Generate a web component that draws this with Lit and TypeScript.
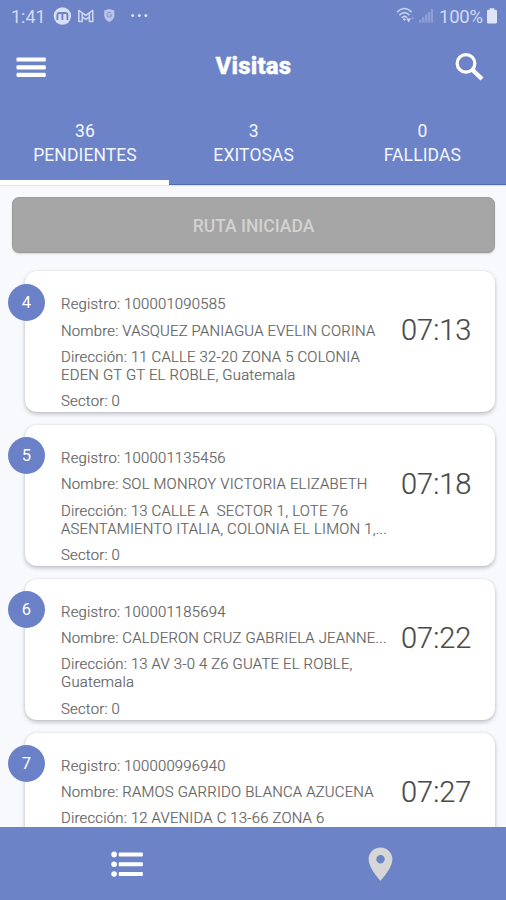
import { LitElement, html, css, nothing } from "lit";
import { customElement, property } from "lit/decorators.js";

interface Visit {
  order: number;
  registro: string;
  nombre: string;
  direccion: string[];
  sector?: string;
  hora: string;
}

const VISITS: Visit[] = [
  { order: 4, registro: "100001090585", nombre: "VASQUEZ PANIAGUA EVELIN CORINA", direccion: ["11 CALLE 32-20 ZONA 5 COLONIA", "EDEN GT GT EL ROBLE, Guatemala"], sector: "0", hora: "07:13" },
  { order: 5, registro: "100001135456", nombre: "SOL MONROY VICTORIA ELIZABETH", direccion: ["13 CALLE A  SECTOR 1, LOTE 76", "ASENTAMIENTO ITALIA, COLONIA EL LIMON 1,..."], sector: "0", hora: "07:18" },
  { order: 6, registro: "100001185694", nombre: "CALDERON CRUZ GABRIELA JEANNE...", direccion: ["13 AV 3-0 4 Z6 GUATE EL ROBLE,", "Guatemala"], sector: "0", hora: "07:22" },
  { order: 7, registro: "100000996940", nombre: "RAMOS GARRIDO BLANCA AZUCENA", direccion: ["12 AVENIDA C 13-66 ZONA 6"], hora: "07:27" },
];

@customElement("status-bar")
class StatusBar extends LitElement {
  static styles = css`
    :host { display: flex; height: 32px; align-items: center; justify-content: space-between; padding: 0 8px 0 11px; color: #d3daf2; font-size: 18px; box-sizing: border-box; }
    .side { display: flex; align-items: center; height: 32px; }
    .clock { width: 42px; font-size: 18px; line-height: 32px; padding-top: 1px; }
    .percent { width: 46px; margin-left: -1px; margin-right: 1px; font-size: 18.5px; letter-spacing: -0.25px; line-height: 32px; padding-top: 1px; }
    svg { display: block; }
  `;
  render() {
    return html`
      <div class="side">
        <span class="clock">1:41</span>
        <svg width="98" height="32" viewBox="0 0 98 32">
          <circle cx="9.4" cy="16" r="8.7" fill="#d9dff4" />
          <path d="M4.4 20V14.6Q4.6 13 6.4 13H12.4Q14.4 13 14.4 14.8V20M9.4 13V20" fill="none" stroke="#6d83c8" stroke-width="1.9" />
          <path d="M25.8 21.6V10.4L32.8 15.4L39.8 10.4V21.6H36.4V16.8L32.8 19.4L29.2 16.8V21.6ZM29.2 16.8V13M36.4 16.8V13" fill="none" stroke="#d0d8f1" stroke-width="1.5" stroke-linejoin="round" />
          <path d="M56.3 8.9L61.4 10.4V15.3C61.4 18.5 58.6 20.9 56.3 22.2C54 20.9 51.2 18.5 51.2 15.3V10.4Z" fill="#bac5e8" />
          <path d="M58.1 13.2A2.3 2.3 0 1 0 58.6 15.1H56.6" fill="none" stroke="#8b9bd4" stroke-width="1.2" />
          <g fill="#d9dff4"><circle cx="79.7" cy="15.5" r="1.5" /><circle cx="86.3" cy="15.5" r="1.5" /><circle cx="92.9" cy="15.5" r="1.5" /></g>
        </svg>
      </div>
      <div class="side">
        <svg width="44" height="32" viewBox="0 0 44 32">
          <g fill="none" stroke="#c8d1ee" stroke-width="1.5">
            <path d="M1.1 12.3Q8.4 4.9 15.7 12.3" /><path d="M3.4 15.1Q8.4 10.2 13.4 15.1" /><path d="M5.7 17.7Q8.4 15.1 11.1 17.7" />
          </g>
          <path d="M6.7 19.3L8.4 18L10.1 19.3L8.4 21Z" fill="#c8d1ee" />
          <path d="M10.4 18.6H15L12.7 22.4Z" fill="#d3daf2" />
          <path d="M15.6 16.2L18.4 18L15.6 19.4Z" fill="#8e9ed5" />
          <path d="M22 22.5L37 9V22.5Z" fill="#7c8fcf" />
          <g fill="#8e9ed5"><rect x="23" y="19.5" width="2" height="3" /><rect x="26" y="17" width="2" height="5.5" /><rect x="29" y="14.5" width="2" height="8" /><rect x="32" y="12" width="2" height="10.5" /><rect x="35" y="9" width="2" height="13.5" /></g>
        </svg>
        <span class="percent">100%</span>
        <svg width="12" height="32" viewBox="0 0 12 32"><path d="M3.7 8.2H8.3V9.8H9.6Q11 9.8 11 11.2V22.2Q11 23.6 9.6 23.6H2.4Q1 23.6 1 22.2V11.2Q1 9.8 2.4 9.8H3.7Z" fill="#dfe5f7" /></svg>
      </div>
    `;
  }
}

@customElement("visit-card")
class VisitCard extends LitElement {
  @property({ attribute: false }) visit!: Visit;
  static styles = css`
    :host { display: block; flex: none; height: 141.3px; }
    .card { position: relative; display: grid; grid-template-columns: 1fr 94px; height: 100%; box-sizing: border-box; padding: 24px 0 0 36px; border-radius: 12px; background: #fff; box-shadow: 0 2px 4px rgba(40, 40, 45, 0.28), 0 0 2px rgba(40, 40, 45, 0.08); }
    .badge { position: absolute; left: -17px; top: 12.4px; width: 37px; height: 37px; border-radius: 50%; background: #6b81c7; color: #fff; font-size: 16.5px; line-height: 37px; text-align: center; }
    .info { display: flex; flex-direction: column; gap: 8.35px; color: #626262; font-size: 14.9px; letter-spacing: 0.2px; line-height: 18px; white-space: pre; min-width: 0; }
    .row { font-weight: 300; -webkit-text-stroke: 0.2px #626262; }
    .line { display: block; }
    .time { color: #494949; font-size: 29px; font-weight: 300; line-height: 36px; padding-top: 17px; -webkit-text-stroke: 0.2px #494949; }
  `;
  render() {
    const v = this.visit;
    return html`
      <div class="card">
        <span class="badge">${v.order}</span>
        <div class="info">
          <span class="row">Registro: ${v.registro}</span>
          <span class="row">Nombre: ${v.nombre}</span>
          <span class="row">${v.direccion.map((line, i) => html`<span class="line">${i === 0 ? "Dirección: " : ""}${line}</span>`)}</span>
          ${v.sector === undefined ? nothing : html`<span class="row">Sector: ${v.sector}</span>`}
        </div>
        <span class="time">${v.hora}</span>
      </div>
    `;
  }
}

@customElement("app-root")
class AppRoot extends LitElement {
  static styles = css`
    :host { display: flex; flex-direction: column; width: 506px; height: 900px; overflow: hidden; background: #f8f9fd; font-family: Roboto, "Liberation Sans", sans-serif; }
    .header { flex: none; height: 185px; background: #6d83c8; color: #fff; box-shadow: inset 0 -1px 0 #5069bb, 0 1px 1px rgba(60, 70, 80, 0.12); display: flex; flex-direction: column; }
    .toolbar { display: grid; grid-template-columns: 60px 1fr 60px; height: 78px; }
    .toolbar svg { display: block; }
    .title { text-align: center; padding-left: 1px; font-size: 24px; font-weight: 800; line-height: 68px; letter-spacing: 0.2px; -webkit-text-stroke: 0.4px #fff; }
    .tabs { display: grid; grid-template-columns: repeat(3, 1fr); height: 75px; }
    .tab { display: flex; flex-direction: column; align-items: center; box-sizing: border-box; padding: 9px 0 0 1.4px; font-size: 17.5px; letter-spacing: 0.1px; line-height: 24px; color: #f3f5fd; border-bottom: 5px solid transparent; }
    .active { border-bottom-color: #fff; }
    .content { flex: 1; min-height: 0; overflow: hidden; display: flex; flex-direction: column; padding: 12px 11px 0 12px; }
    .route { flex: none; height: 56px; border: 1px solid #9c9c9c; border-radius: 7px; background: #a5a5a5; color: #d4d1d1; font: 500 17.5px/56px Roboto, sans-serif; text-align: center; padding: 0; box-shadow: 0 1px 2px rgba(0, 0, 0, 0.15); }
    .list { display: flex; flex-direction: column; gap: 12.5px; padding: 18.2px 0 0 13px; }
    .nav { flex: none; height: 73px; display: grid; grid-template-columns: 1fr 1fr; justify-items: center; background: #6d83c8; position: relative; }
    .nav svg { display: block; }
  `;
  render() {
    const tabs = [["36", "PENDIENTES"], ["3", "EXITOSAS"], ["0", "FALLIDAS"]];
    return html`
      <header class="header">
        <status-bar></status-bar>
        <div class="toolbar">
          <svg width="60" height="70" viewBox="0 0 60 70"><g fill="#fff"><rect x="16.5" y="25.4" width="29.3" height="4.2" rx="1.2" /><rect x="16.5" y="33.2" width="29.3" height="4.2" rx="1.2" /><rect x="16.5" y="40.7" width="29.3" height="4.2" rx="1.2" /></g></svg>
          <span class="title">Visitas</span>
          <svg width="60" height="70" viewBox="0 0 60 70"><circle cx="20" cy="31.4" r="8.8" fill="none" stroke="#fff" stroke-width="3.3" /><path d="M26.3 37.8L36 47" stroke="#fff" stroke-width="4.3" /></svg>
        </div>
        <nav class="tabs">
          ${tabs.map(([n, t], i) => html`<div class="tab ${i === 0 ? "active" : ""}"><span>${n}</span><span>${t}</span></div>`)}
        </nav>
      </header>
      <main class="content">
        <button class="route">RUTA INICIADA</button>
        <div class="list">${VISITS.map((v) => html`<visit-card .visit=${v}></visit-card>`)}</div>
      </main>
      <footer class="nav">
        <svg width="40" height="73" viewBox="0 0 40 73"><g fill="#fff"><circle cx="7.1" cy="27.4" r="2.8" /><circle cx="7.1" cy="37.2" r="2.8" /><circle cx="7.1" cy="47" r="2.8" /><rect x="11.7" y="25.5" width="24.2" height="3.9" rx="1" /><rect x="11.7" y="35.3" width="24.2" height="3.9" rx="1" /><rect x="11.7" y="45.1" width="24.2" height="3.9" rx="1" /></g></svg>
        <svg width="40" height="73" viewBox="0 0 40 73"><path fill="#d6d6d6" fill-rule="evenodd" d="M20.5 20.5C13.8 20.5 8.6 25.7 8.6 32.2C8.6 41 20.5 53.8 20.5 53.8S32.4 41 32.4 32.2C32.4 25.7 27.2 20.5 20.5 20.5ZM20.5 28.1A4.2 4.2 0 1 1 20.5 36.5A4.2 4.2 0 1 1 20.5 28.1Z" /></svg>
      </footer>
    `;
  }
}
